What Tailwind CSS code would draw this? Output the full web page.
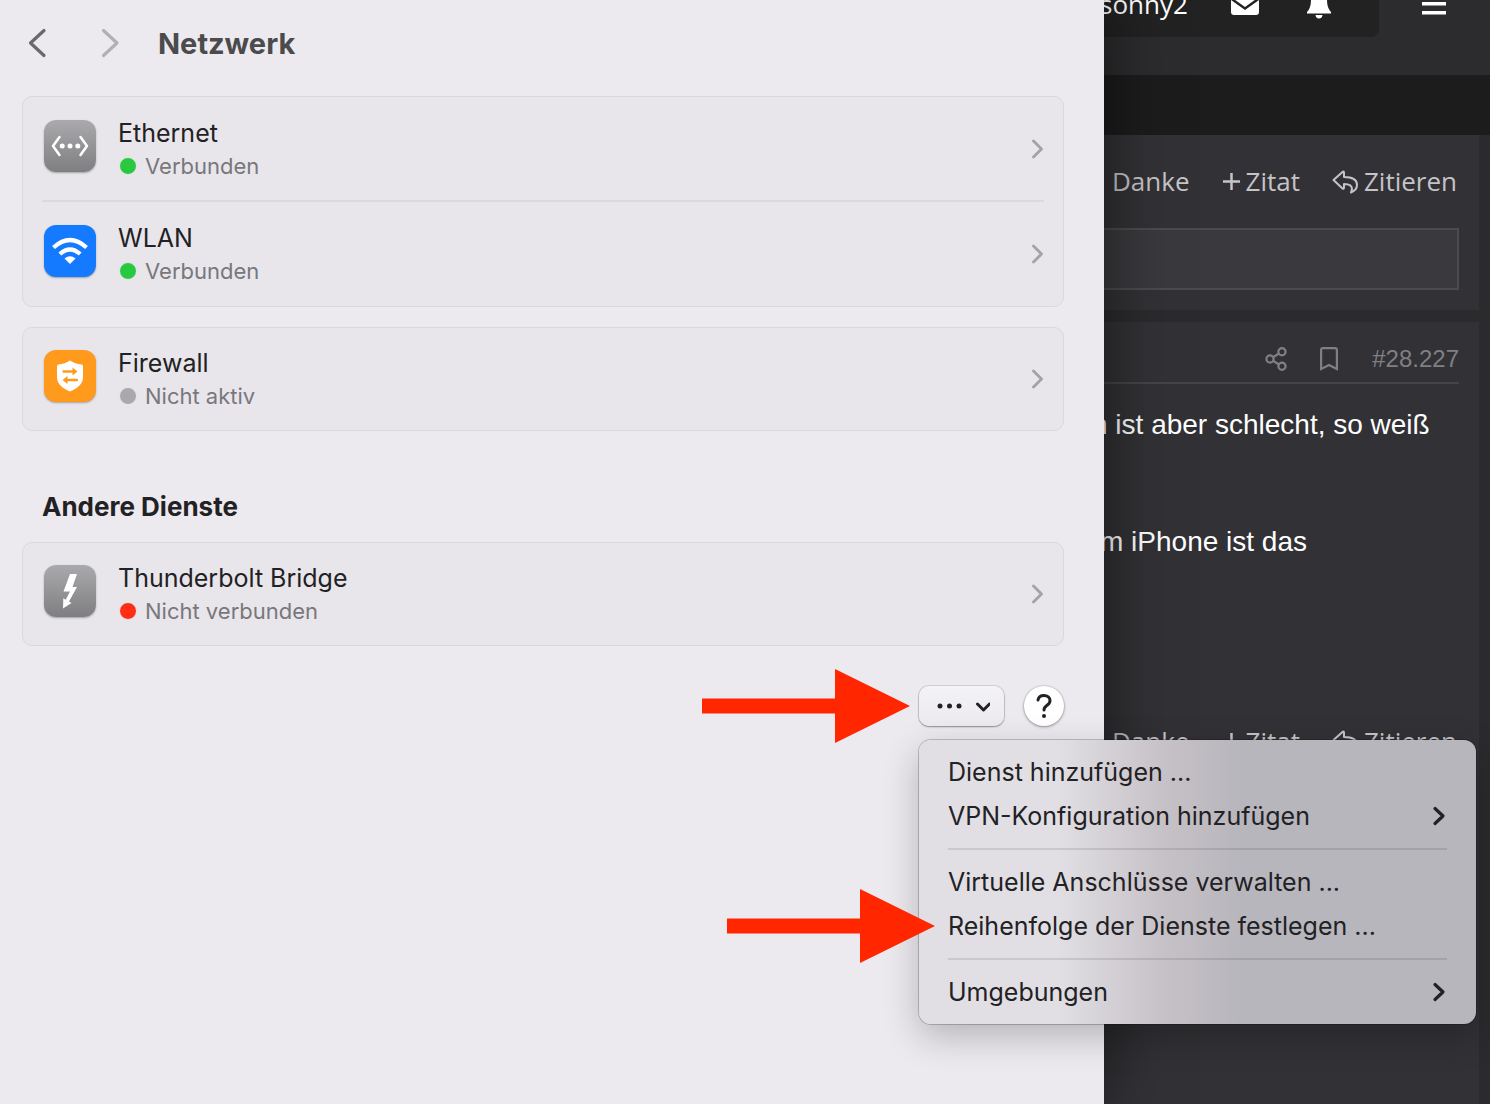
<!DOCTYPE html>
<html lang="de">
<head>
    <meta charset="UTF-8">
    <meta name="viewport" content="width=device-width, initial-scale=1">
    <title>Netzwerk</title>
    <script src="https://cdn.jsdelivr.net/npm/@tailwindcss/browser@4"></script>
</head>
<body class="flex min-h-screen overflow-hidden bg-[#2b2b2d] font-['Inter',sans-serif] text-[#222124]">

<!-- Settings window -->
<main class="relative z-10 min-w-0 flex-1 bg-[#eceaef] pl-[22px] pr-10 shadow-[0_0_64px_rgba(0,0,0,0.55)]">
    <header class="flex h-24 items-start pt-6">
        <button type="button" aria-label="Zurück" class="flex h-10 w-8 items-center justify-center">
            <svg class="h-8 w-5" viewBox="0 0 20 32" fill="none" stroke="#69686c" stroke-width="3.200" stroke-linecap="round" stroke-linejoin="round"><path d="M16 2.500L2.500 15L16 27.500"/></svg>
        </button>
        <button type="button" aria-label="Vorwärts" class="ml-10 flex h-10 w-8 items-center justify-center" disabled>
            <svg class="h-8 w-5" viewBox="0 0 20 32" fill="none" stroke="#b2b0b5" stroke-width="3.200" stroke-linecap="round" stroke-linejoin="round"><path d="M3.500 2.500L17 15L3.500 27.500"/></svg>
        </button>
        <h1 class="ml-8 text-[29px] font-bold leading-10 text-[#4b4a4d]">Netzwerk</h1>
    </header>

    <section class="rounded-[10px] border border-[#dad8dd] bg-[#e8e6eb] px-[19px]">
        <a href="#" class="flex h-[103px] items-center">
            <span class="pb-[6px] pl-[2px]">
                <svg class="size-[52px] rounded-xl bg-linear-to-b from-[#aaa9ad] to-[#7f7f81] shadow-[0_1px_2px_rgba(0,0,0,0.3)]" viewBox="0 0 52 52" fill="none" stroke="#fff" stroke-width="2.500" stroke-linecap="round" stroke-linejoin="round"><path d="M15.500 17L9 26L15.500 35M36.500 17L43 26L36.500 35"/><g fill="#fff" stroke="none"><circle cx="18.200" cy="26" r="2.500"/><circle cx="26" cy="26" r="2.500"/><circle cx="33.800" cy="26" r="2.500"/></g></svg>
            </span>
            <span class="ml-[22px] flex-1">
                <span class="block text-[25px] leading-[34px]">Ethernet</span>
                <span class="flex items-center gap-2 pl-px text-[22px] leading-8 text-[#78777b]"><span class="size-[18px] rounded-full border border-[#e8e6eb] bg-[#28c840]"></span>Verbunden</span>
            </span>
            <svg class="h-5 w-3" viewBox="0 0 12 20" fill="none" stroke="#a3a2a6" stroke-width="2.800" stroke-linecap="round" stroke-linejoin="round"><path d="M1.500 2L9.500 10L1.500 18"/></svg>
        </a>
        <hr class="border-t-2 border-[#dbd9de]">
        <a href="#" class="flex h-[104px] items-center">
            <span class="pb-[6px] pl-[2px]">
                <svg class="size-[52px] rounded-xl bg-[#147aff] shadow-[0_1px_2px_rgba(0,0,0,0.3)]" viewBox="0 0 52 52" fill="none" stroke="#fff" stroke-width="4.200"><path d="M9.500 22.500Q26 7.500 42.500 22.500M15.800 29Q26 20 36.200 29"/><path d="M20.500 33.500Q26 29 31.500 33.500L26 39Z" fill="#fff" stroke="none"/></svg>
            </span>
            <span class="ml-[22px] flex-1">
                <span class="block text-[25px] leading-[34px]">WLAN</span>
                <span class="flex items-center gap-2 pl-px text-[22px] leading-8 text-[#78777b]"><span class="size-[18px] rounded-full border border-[#e8e6eb] bg-[#28c840]"></span>Verbunden</span>
            </span>
            <svg class="h-5 w-3" viewBox="0 0 12 20" fill="none" stroke="#a3a2a6" stroke-width="2.800" stroke-linecap="round" stroke-linejoin="round"><path d="M1.500 2L9.500 10L1.500 18"/></svg>
        </a>
    </section>

    <section class="mt-5 rounded-[10px] border border-[#dad8dd] bg-[#e8e6eb] px-[19px]">
        <a href="#" class="flex h-[102px] items-center">
            <span class="pb-[6px] pl-[2px]">
                <svg class="size-[52px] rounded-xl bg-[#ff9a1c] shadow-[0_1px_2px_rgba(0,0,0,0.3)]" viewBox="0 0 52 52"><path d="M26 10.500Q31 14 37.500 14.500Q39 14.700 39 16.500V27C39 34 34 38 26 41.500C18 38 13 34 13 27V16.500Q13 14.700 14.500 14.500Q21 14 26 10.500Z" fill="#fff"/><path d="M19.500 21.500H30M33 30H22" stroke="#ff9a1c" stroke-width="2.300" stroke-linecap="round"/><path d="M28.500 17.500L33.500 21.500L28.500 25.500ZM23.500 26L18.500 30L23.500 34Z" fill="#ff9a1c"/></svg>
            </span>
            <span class="ml-[22px] flex-1">
                <span class="block text-[25px] leading-[34px]">Firewall</span>
                <span class="flex items-center gap-2 pl-px text-[22px] leading-8 text-[#78777b]"><span class="size-[18px] rounded-full border border-[#e8e6eb] bg-[#aaa8ad]"></span>Nicht aktiv</span>
            </span>
            <svg class="h-5 w-3" viewBox="0 0 12 20" fill="none" stroke="#a3a2a6" stroke-width="2.800" stroke-linecap="round" stroke-linejoin="round"><path d="M1.500 2L9.500 10L1.500 18"/></svg>
        </a>
    </section>

    <h2 class="mb-[18px] ml-5 mt-[59px] text-[26px] font-bold leading-[34px]">Andere Dienste</h2>
    <section class="rounded-[10px] border border-[#dad8dd] bg-[#e8e6eb] px-[19px]">
        <a href="#" class="flex h-[102px] items-center">
            <span class="pb-[6px] pl-[2px]">
                <svg class="size-[52px] rounded-xl bg-linear-to-b from-[#aaa9ad] to-[#7f7f81] shadow-[0_1px_2px_rgba(0,0,0,0.3)]" viewBox="0 0 52 52"><path d="M26 9H33L28.500 22H33L25 36.500L27.500 38L19 43.500L19.300 33.200L21.700 34.700L26 26.500H19.500Z" fill="#fff"/></svg>
            </span>
            <span class="ml-[22px] flex-1">
                <span class="block text-[25px] leading-[34px]">Thunderbolt Bridge</span>
                <span class="flex items-center gap-2 pl-px text-[22px] leading-8 text-[#78777b]"><span class="size-[18px] rounded-full border border-[#e8e6eb] bg-[#ff2d16]"></span>Nicht verbunden</span>
            </span>
            <svg class="h-5 w-3" viewBox="0 0 12 20" fill="none" stroke="#a3a2a6" stroke-width="2.800" stroke-linecap="round" stroke-linejoin="round"><path d="M1.500 2L9.500 10L1.500 18"/></svg>
        </a>
    </section>

    <div class="mt-10 flex justify-end gap-5">
        <div class="relative">
            <button type="button" aria-label="Weitere Optionen" aria-haspopup="menu" class="flex h-10 w-[85px] items-center justify-center rounded-[10px] bg-linear-to-b from-[#f3f2f6] to-[#eceaef] shadow-[0_0_0_1px_rgba(0,0,0,0.1),0_1px_2px_rgba(0,0,0,0.35)]">
                <svg class="h-5 w-14" viewBox="0 0 56 20"><g fill="#222124"><circle cx="6" cy="10" r="2.500"/><circle cx="15.500" cy="10" r="2.500"/><circle cx="25" cy="10" r="2.500"/></g><path d="M44 8L50 14L56 8" transform="translate(-0.500 0)" fill="none" stroke="#222124" stroke-width="3" stroke-linecap="round" stroke-linejoin="round"/></svg>
            </button>
            <svg class="absolute right-full top-1/2 mr-[9px] h-[74px] w-52 -translate-y-1/2" viewBox="0 0 208 74" fill="#ff2600"><path d="M0 29.500H133V0L208 37L133 74V44.500H0Z"/></svg>

            <!-- Open menu -->
            <ul role="menu" class="absolute left-0 top-full mt-[14px] w-[557px] rounded-xl bg-linear-to-r from-[#e1dfe4] from-25% via-[#c6c1c7] via-44% to-[#b7b6bc] to-58% py-[10px] text-[25px] leading-[44px] shadow-[0_0_0_1px_rgba(0,0,0,0.2),0_12px_36px_rgba(0,0,0,0.24)]">
                <li role="none"><button type="button" role="menuitem" class="block w-full px-[29px] text-left">Dienst hinzufügen ...</button></li>
                <li role="none"><button type="button" role="menuitem" class="flex w-full items-center justify-between px-[29px] text-left">VPN-Konfiguration hinzufügen
                    <svg class="h-5 w-4" viewBox="0 0 16 20" fill="none" stroke="#222124" stroke-width="3.200" stroke-linecap="round" stroke-linejoin="round"><path d="M4 2.500L12 10L4 17.500"/></svg></button></li>
                <li role="separator" class="mx-[29px] my-[10px] h-[2px] bg-black/10"></li>
                <li role="none"><button type="button" role="menuitem" class="block w-full px-[29px] text-left">Virtuelle Anschlüsse verwalten ...</button></li>
                <li role="none" class="relative">
                    <button type="button" role="menuitem" class="block w-full px-[29px] text-left">Reihenfolge der Dienste festlegen ...</button>
                    <svg class="absolute right-full top-1/2 -mr-4 h-[74px] w-52 -translate-y-1/2" viewBox="0 0 208 74" fill="#ff2600"><path d="M0 29.500H133V0L208 37L133 74V44.500H0Z"/></svg>
                </li>
                <li role="separator" class="mx-[29px] my-[10px] h-[2px] bg-black/10"></li>
                <li role="none"><button type="button" role="menuitem" class="flex w-full items-center justify-between px-[29px] text-left">Umgebungen
                    <svg class="h-5 w-4" viewBox="0 0 16 20" fill="none" stroke="#222124" stroke-width="3.200" stroke-linecap="round" stroke-linejoin="round"><path d="M4 2.500L12 10L4 17.500"/></svg></button></li>
            </ul>
        </div>
        <button type="button" aria-label="Hilfe" class="flex size-10 items-center justify-center rounded-full bg-white shadow-[0_0_0_1px_rgba(0,0,0,0.08),0_1px_3px_rgba(0,0,0,0.35)]">
            <svg class="h-6 w-4" viewBox="0 0 16 24" fill="none" stroke="#222124" stroke-width="3" stroke-linecap="round" stroke-linejoin="round"><path d="M2 6C2.500 3 5 1.500 8 1.500C11.500 1.500 14 3.500 14 6.700C14 11.500 8 11 8 16"/><circle cx="8" cy="22" r="2" fill="#222124" stroke="none"/></svg>
        </button>
    </div>
</main>

<!-- Forum page behind the window -->
<aside class="flex w-[386px] shrink-0 flex-col overflow-hidden font-['Open_Sans',sans-serif] text-[26px] text-[#c5c4c8]">
    <header class="flex h-[75px] items-start justify-between bg-[#2c2c2e] pr-11 text-white">
        <div class="-ml-1 -mt-8 flex h-[69px] w-[279px] items-center rounded-br-lg bg-[#222223]">
            <a href="#" class="pt-1 font-medium">sonny2</a>
            <a href="#" aria-label="Nachrichten" class="ml-[43px]"><svg class="h-6 w-7" viewBox="0 0 28 24" fill="#fff"><path d="M3 2H25Q28 2 28 5V6L14 16L0 6V5Q0 2 3 2ZM0 9L14 19L28 9V21Q28 24 25 24H3Q0 24 0 21Z"/></svg></a>
            <a href="#" aria-label="Hinweise" class="ml-12"><svg class="h-8 w-6" viewBox="0 0 24 32" fill="#fff"><path d="M10.500 2Q12 0 13.500 2V4Q20 5 20 13Q20 21 24 25V26.500H0V25Q4 21 4 13Q4 5 10.500 4ZM8.500 28H15.500Q15 31.500 12 31.500Q9 31.500 8.500 28Z"/></svg></a>
        </div>
        <button type="button" aria-label="Menü" class="-mt-2"><svg class="h-6 w-6" viewBox="0 0 24 24" fill="#fff"><path d="M0 1H24V4.500H0ZM0 10H24V13.500H0ZM0 19H24V22.500H0Z"/></svg></button>
    </header>
    <div class="h-15 bg-[#1c1c1c]"></div>

    <article class="mr-[11px] h-[175px] bg-[#323135] pr-5 pt-7">
        <div class="flex justify-end gap-8 pr-[2px] leading-9">
            <a href="#">Danke</a>
            <a href="#" class="flex items-center gap-[5px]"><svg class="size-[19px]" viewBox="0 0 20 20" stroke="#c5c4c8" stroke-width="2.600"><path d="M1 10H19M10 1V19"/></svg>Zitat</a>
            <a href="#" class="flex items-center gap-[6px]"><svg class="size-[26px]" viewBox="0 0 26 26" fill="none" stroke="#c5c4c8" stroke-width="2" stroke-linejoin="round"><path d="M10.500 4L1.500 12L10.500 20.500Q12 21.500 12 19.500V16Q20 16 20 21L19 24.500Q25 22 25 17Q25 9 12 9V5Q12 2.800 10.500 4Z"/></svg>Zitieren</a>
        </div>
        <div class="mt-[29px] h-[62px] border-2 border-l-0 border-[#4b4b4e] bg-[#3a393d]"></div>
    </article>

    <article class="mr-[11px] mt-3 flex-1 bg-[#323135] pr-5 pt-[14px] font-['Liberation_Sans',sans-serif]">
        <div class="flex h-12 items-center justify-end border-b-2 border-[#454448] text-[24px] text-[#808083]">
            <a href="#" aria-label="Teilen"><svg class="h-6 w-[22px]" viewBox="0 0 22 24" fill="none" stroke="#808083" stroke-width="2.200"><circle cx="5" cy="12" r="3.600"/><circle cx="17" cy="4.700" r="3.600"/><circle cx="17" cy="19.300" r="3.600"/><path d="M8 10.200L14 6.500M8 13.800L14 17.500"/></svg></a>
            <a href="#" aria-label="Lesezeichen" class="ml-[33px]"><svg class="h-6 w-[18px]" viewBox="0 0 18 24" fill="none" stroke="#808083" stroke-width="2.200"><path d="M1.100 22V3Q1.100 1.100 3 1.100H15Q16.900 1.100 16.900 3V22L9 18Z"/></svg></a>
            <a href="#" class="ml-[34px]">#28.227</a>
        </div>
        <p class="-ml-3 mt-[21px] whitespace-nowrap text-[28px] leading-[39px] text-white">n ist aber schlecht, so weiß</p>
        <p class="-ml-1 mt-[78px] whitespace-nowrap text-[28px] leading-[39px] text-white">m iPhone ist das</p>
        <div class="mt-[162px] flex justify-end gap-8 pr-[2px] font-['Open_Sans',sans-serif] leading-9">
            <a href="#">Danke</a>
            <a href="#" class="flex items-center gap-[5px]"><svg class="size-[19px]" viewBox="0 0 20 20" stroke="#c5c4c8" stroke-width="2.600"><path d="M1 10H19M10 1V19"/></svg>Zitat</a>
            <a href="#" class="flex items-center gap-[6px]"><svg class="size-[26px]" viewBox="0 0 26 26" fill="none" stroke="#c5c4c8" stroke-width="2" stroke-linejoin="round"><path d="M10.500 4L1.500 12L10.500 20.500Q12 21.500 12 19.500V16Q20 16 20 21L19 24.500Q25 22 25 17Q25 9 12 9V5Q12 2.800 10.500 4Z"/></svg>Zitieren</a>
        </div>
    </article>
</aside>
</body>
</html>
